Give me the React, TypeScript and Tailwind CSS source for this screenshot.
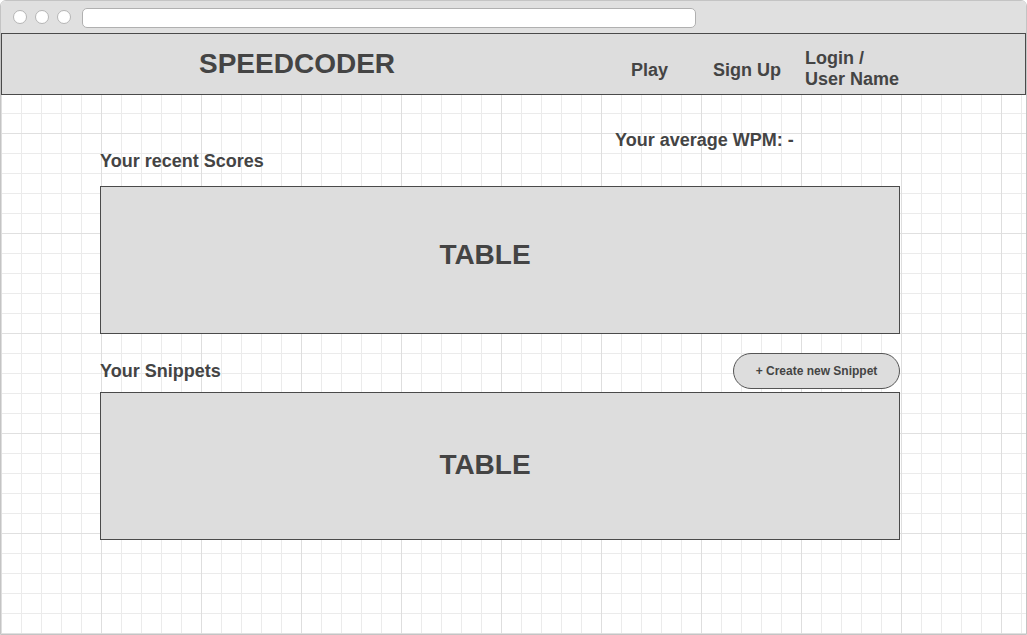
export default function App() {
  const font = { fontFamily: '"Liberation Sans", Arial, Helvetica, sans-serif' };
  return (
    <div className="w-[1027px] h-[635px] bg-white" style={font}>
      <div className="w-[1027px] h-[635px] flex flex-col border border-[#c4c4c4] rounded-t-[6px] overflow-hidden bg-white text-[#444444]">
        {/* browser chrome */}
        <div className="h-[32px] shrink-0 bg-[#e0e0e0] flex items-center pl-[12px]">
          <div className="flex gap-[8px] items-center">
            <span className="w-[14px] h-[14px] rounded-full bg-white border border-[#b5b5b5]" />
            <span className="w-[14px] h-[14px] rounded-full bg-white border border-[#b5b5b5]" />
            <span className="w-[14px] h-[14px] rounded-full bg-white border border-[#b5b5b5]" />
          </div>
          <div className="ml-[11px] w-[614px] h-[20px] mt-[1px] rounded-[5px] bg-white border border-[#b0b0b0]" />
        </div>
        {/* header */}
        <div className="h-[62px] shrink-0 bg-[#dddddd] border border-[#4a4a4a] flex items-center">
          <div className="ml-[197px] text-[28px] font-bold leading-none">SPEEDCODER</div>
          <div className="ml-[236px] mt-[11px] flex items-center text-[18px] font-bold leading-[20px]">
            <span>Play</span>
            <span className="ml-[45px]">Sign Up</span>
            <span className="ml-[24px] mt-[-1px] leading-[21px]">
              Login /
              <br />
              User Name
            </span>
          </div>
        </div>
        {/* content with grid */}
        <div className="flex-1 bg-white bg-[linear-gradient(to_right,#dedede_1px,transparent_1px),linear-gradient(to_bottom,#e0e0e0_1px,transparent_1px),linear-gradient(to_right,#ebebeb_1px,transparent_1px),linear-gradient(to_bottom,#ebebeb_1px,transparent_1px)] [background-size:100px_100px,100px_100px,20px_20px,20px_20px] [background-position:0_0,0_38px,0_18px,0_18px]">
          <div className="ml-[99px] w-[800px] pt-[35px] flex flex-col">
            <div className="h-[20px] pl-[515px] text-[18px] font-bold leading-[20px] whitespace-nowrap">Your average WPM: -</div>
            <div className="mt-[1px] h-[20px] text-[18px] font-bold leading-[20px]">Your recent Scores</div>
            <div className="mt-[15px] h-[148px] bg-[#dddddd] border border-[#4a4a4a] flex items-center justify-center">
              <span className="text-[28px] font-bold leading-none mr-[30px] mt-[-10px]">TABLE</span>
            </div>
            <div className="mt-[19px] h-[36px] flex items-center justify-between">
              <span className="text-[18px] font-bold leading-[20px]">Your Snippets</span>
              <button className="w-[167px] h-[36px] rounded-full bg-[#dddddd] border border-[#555555] text-[12px] font-bold text-[#444444] leading-none">
                + Create new Snippet
              </button>
            </div>
            <div className="mt-[3px] h-[148px] bg-[#dddddd] border border-[#4a4a4a] flex items-center justify-center">
              <span className="text-[28px] font-bold leading-none mr-[30px] mt-[-2px]">TABLE</span>
            </div>
          </div>
        </div>
      </div>
    </div>
  );
}
